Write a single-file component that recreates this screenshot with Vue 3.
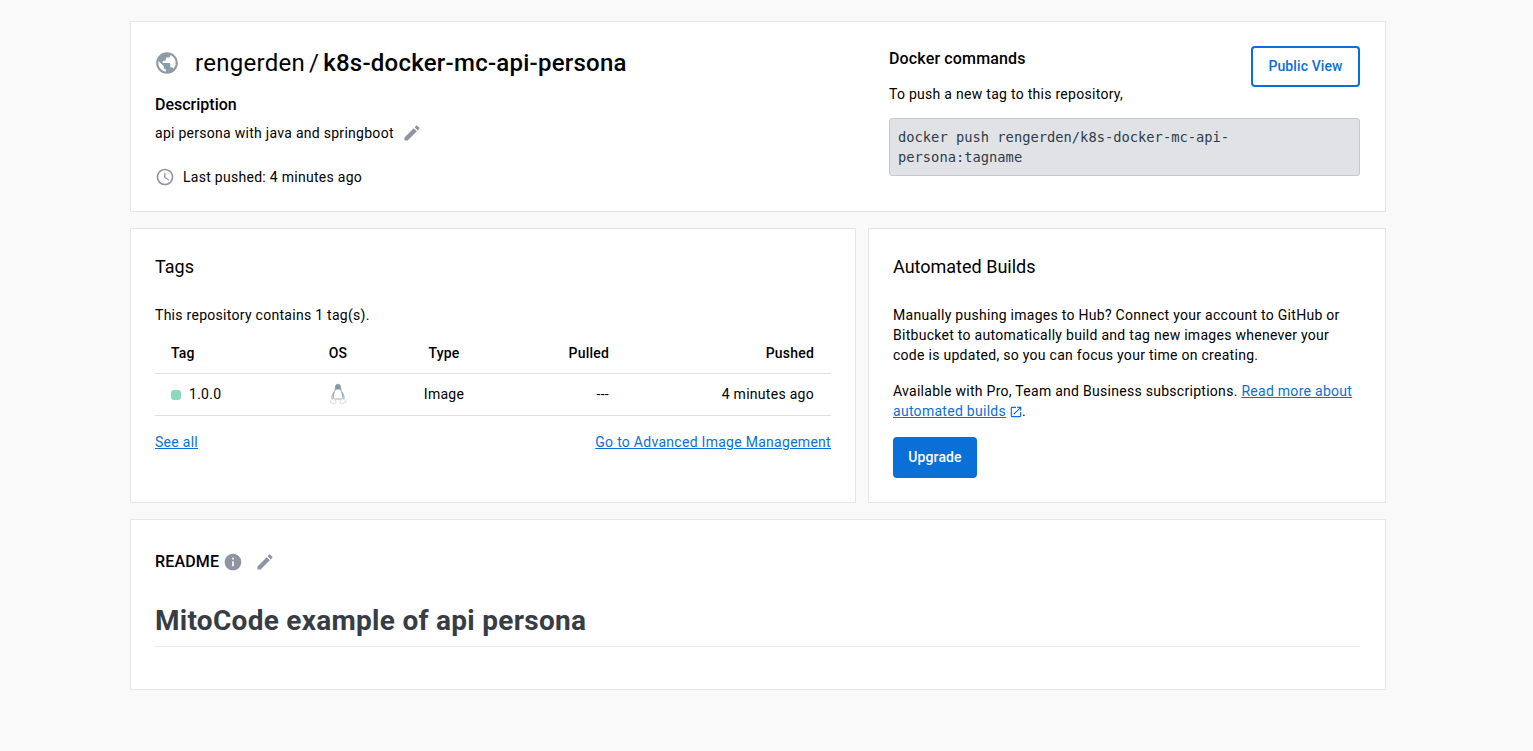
<template>
  <div class="page">
    <section class="card top">
      <div class="repo">
        <h1 class="repo-title">
          <svg class="globe" viewBox="0 0 24 24" width="26" height="26"><path d="M12 2C6.48 2 2 6.48 2 12s4.48 10 10 10 10-4.48 10-10S17.52 2 12 2zm-1 17.93c-3.95-.49-7-3.85-7-7.93 0-.62.08-1.21.21-1.79L9 15v1c0 1.1.9 2 2 2v1.93zm6.9-2.54c-.26-.81-1-1.39-1.9-1.39h-1v-3c0-.55-.45-1-1-1H8v-2h2c.55 0 1-.45 1-1V7h2c1.1 0 2-.9 2-2v-.41c2.93 1.19 5 4.06 5 7.41 0 2.08-.8 3.97-2.1 5.39z"/></svg>
          <span class="owner">rengerden</span><span class="slash">/</span><b>k8s-docker-mc-api-persona</b>
        </h1>
        <h2 class="label">Description</h2>
        <div class="desc">
          <span>api persona with java and springboot</span>
          <svg class="pencil" viewBox="0 0 24 24" width="20" height="20"><path d="M3 17.25V21h3.75L17.81 9.94l-3.75-3.75L3 17.25zM20.71 7.04a1 1 0 0 0 0-1.41l-2.34-2.34a1 1 0 0 0-1.41 0l-1.83 1.83 3.75 3.75 1.83-1.83z"/></svg>
        </div>
        <div class="pushed">
          <svg class="clock" viewBox="0 0 24 24" width="20" height="20"><path d="M11.99 2C6.47 2 2 6.48 2 12s4.47 10 9.99 10C17.52 22 22 17.52 22 12S17.52 2 11.99 2zM12 20c-4.42 0-8-3.58-8-8s3.58-8 8-8 8 3.58 8 8-3.58 8-8 8zm.5-13H11v6l5.25 3.15.75-1.23-4.5-2.67V7z"/></svg>
          <span>Last pushed: 4 minutes ago</span>
        </div>
      </div>
      <div class="commands">
        <div class="commands-head">
          <div>
            <h2 class="label">Docker commands</h2>
            <p class="push-note">To push a new tag to this repository,</p>
          </div>
          <button class="btn-outline"><span>Public View</span></button>
        </div>
        <div class="code">docker push rengerden/k8s-docker-mc-api-persona:tagname</div>
      </div>
    </section>

    <div class="middle">
      <section class="card tags">
        <h3 class="card-title">Tags</h3>
        <p class="count">This repository contains 1 tag(s).</p>
        <table class="tag-table">
          <thead>
            <tr>
              <th class="c-tag">Tag</th>
              <th class="c-os">OS</th>
              <th class="c-type">Type</th>
              <th class="c-pulled">Pulled</th>
              <th class="c-pushed">Pushed</th>
            </tr>
          </thead>
          <tbody>
            <tr v-for="row in rows" :key="row.tag">
              <td class="c-tag"><i class="dot"></i>{{ row.tag }}</td>
              <td class="c-os">
                <svg class="tux" viewBox="0 0 18 22" width="18" height="22">
                  <path d="M9 1.200C6.900 1.200 6.300 3 6.300 5.200c0 1.900-1 3.200-2 4.900-1 1.800-1.500 3.700-1.300 5.900h12c.2-2.200-.3-4.100-1.300-5.900-1-1.700-2-3-2-4.900C11.700 3 11.100 1.200 9 1.200z" fill="#fff" stroke="#9fadb8" stroke-width="1"/>
                  <path d="M9 1.200C6.900 1.200 6.300 3 6.300 5.200c0 .8-.2 1.500-.5 2.200C7 7.100 7.700 6.300 9 6.300s2 .8 3.200 1.100c-.3-.7-.5-1.400-.5-2.200C11.700 3 11.100 1.200 9 1.200z" fill="#8597a5"/>
                  <path d="M5.400 9.500C4.500 11.300 4.100 13 4.300 15M12.600 9.500c.9 1.800 1.300 3.500 1.100 5.500" fill="none" stroke="#7f909e" stroke-width=".9"/>
                  <path d="M3.800 15.800C3 17 1.900 17.600 1.100 18.300c-.5.500-.2 1 .5 1.200l3.100 1.200c1 .3 2.100-.1 2.300-1 .1-.9-.5-2-1.200-3.200-.6-1-1.500-1.300-2-.7zM14.200 15.800c.8 1.200 1.900 1.800 2.700 2.500.5.500.2 1-.5 1.200l-3.100 1.200c-1 .3-2.100-.1-2.300-1-.1-.9.5-2 1.200-3.200.6-1 1.500-1.300 2-.7z" fill="#fff" stroke="#c5ced6" stroke-width=".8"/>
                </svg>
              </td>
              <td class="c-type">{{ row.type }}</td>
              <td class="c-pulled">{{ row.pulled }}</td>
              <td class="c-pushed">{{ row.pushed }}</td>
            </tr>
          </tbody>
        </table>
        <div class="tag-links">
          <a href="#">See all</a>
          <a href="#">Go to Advanced Image Management</a>
        </div>
      </section>

      <section class="card builds">
        <h3 class="card-title">Automated Builds</h3>
        <p class="builds-text">Manually pushing images to Hub? Connect your account to GitHub or Bitbucket to automatically build and tag new images whenever your code is updated, so you can focus your time on creating.</p>
        <p class="builds-text plans">Available with Pro, Team and Business subscriptions. <a href="#">Read more about automated builds</a><svg class="ext" viewBox="0 0 24 24" width="14" height="14"><path d="M19 19H5V5h7V3H5a2 2 0 0 0-2 2v14a2 2 0 0 0 2 2h14c1.100 0 2-.9 2-2v-7h-2v7zM14 3v2h3.590l-9.830 9.830 1.410 1.410L19 6.410V10h2V3h-7z"/></svg>.</p>
        <button class="btn-solid">Upgrade</button>
      </section>
    </div>

    <section class="card readme">
      <div class="readme-head">
        <span class="readme-label">README</span>
        <svg class="info" viewBox="0 0 24 24" width="20" height="20"><path d="M12 2C6.480 2 2 6.480 2 12s4.480 10 10 10 10-4.480 10-10S17.520 2 12 2zm1 15h-2v-6h2v6zm0-8h-2V7h2v2z"/></svg>
        <svg class="pencil" viewBox="0 0 24 24" width="20" height="20"><path d="M3 17.250V21h3.750L17.810 9.940l-3.750-3.750L3 17.250zM20.710 7.040a1 1 0 0 0 0-1.410l-2.340-2.340a1 1 0 0 0-1.410 0l-1.830 1.830 3.750 3.750 1.830-1.830z"/></svg>
      </div>
      <h1 class="readme-title">MitoCode example of api persona</h1>
    </section>
  </div>
</template>

<script setup>
const rows = [
  { tag: '1.0.0', type: 'Image', pulled: '---', pushed: '4 minutes ago' }
]
</script>

<style>
html, body {
  margin: 0;
  background: #f9f9f9;
}
</style>

<style scoped>
.page {
  box-sizing: border-box;
  width: 1256px;
  height: 751px;
  margin-left: 130px;
  padding-top: 21px;
  display: flex;
  flex-direction: column;
  gap: 16px;
  font-family: Roboto, "Liberation Sans", sans-serif;
  font-size: 14px;
  line-height: 20px;
  letter-spacing: 0.28px;
  color: #000;
}
.card {
  box-sizing: border-box;
  background: #fff;
  border: 1px solid #e6e6e6;
}
h1, h2, h3, p {
  margin: 0;
  font-weight: normal;
}
a {
  color: #0b6fd8;
}

.top {
  height: 191px;
  padding: 24px 25px 0 24px;
  display: flex;
}
.repo {
  width: 734px;
}
.repo-title {
  display: flex;
  align-items: center;
  height: 34px;
  font-size: 24px;
  line-height: 34px;
}
.globe {
  fill: #8c9ba5;
  margin-right: 13px;
  margin-left: -1px;
}
.owner {
  margin-left: 2px;
}
.slash {
  margin: 0 4px;
}
.repo-title b {
  font-weight: 500;
  letter-spacing: 0.24px;
}
.label {
  font-size: 16px;
  font-weight: 500;
  line-height: 20px;
  letter-spacing: 0.15px;
}
.repo .label {
  margin-top: 15px;
  letter-spacing: 0;
}
.desc {
  display: flex;
  align-items: center;
  gap: 8px;
  margin-top: 8px;
}
.pencil {
  fill: #8f94a3;
}
.pushed {
  display: flex;
  align-items: center;
  gap: 8px;
  margin-top: 24px;
  height: 20px;
}
.clock {
  fill: #8f94a3;
}
.commands {
  width: 471px;
}
.commands-head {
  display: flex;
  justify-content: space-between;
  height: 72px;
}
.commands .label {
  margin-top: 3px;
}
.push-note {
  margin-top: 15px;
}
.btn-outline {
  box-sizing: border-box;
  width: 109px;
  height: 41px;
  padding-bottom: 2px;
  background: #fff;
  border: 2px solid #0b6fd8;
  border-radius: 4px;
  color: #0b6fd8;
  font: 500 14px Roboto, sans-serif;
  letter-spacing: 0.1px;
}
.code {
  box-sizing: border-box;
  height: 58px;
  padding: 8px 8px;
  background: #e1e2e6;
  border: 1px solid #c4c8d1;
  border-radius: 3px;
  color: #2f3d4a;
  font-family: "DejaVu Sans Mono", monospace;
  font-size: 13.75px;
  line-height: 20px;
  letter-spacing: 0;
}

.middle {
  display: flex;
  gap: 12px;
  height: 275px;
}
.tags {
  width: 726px;
  padding: 24px;
}
.builds {
  width: 518px;
  padding: 24px;
}
.card-title {
  font-size: 18px;
  line-height: 28px;
  letter-spacing: 0;
}
.count {
  margin-top: 24px;
}
.tag-table {
  width: 100%;
  margin-top: 10px;
  border-collapse: collapse;
  table-layout: fixed;
}
.tag-table th {
  height: 38px;
  padding: 0 16px 2px;
  box-sizing: border-box;
  font-weight: 500;
  letter-spacing: 0.2px;
  border-bottom: 1px solid #dfe0e3;
}
.tag-table td {
  height: 42px;
  padding: 0 16px;
  box-sizing: border-box;
  border-bottom: 1px solid #dfe0e3;
}
.c-tag {
  width: 144px;
  text-align: left;
}
.c-os {
  width: 78px;
  text-align: center;
}
.c-type {
  width: 134px;
  text-align: center;
}
.c-pulled {
  width: 114px;
  text-align: right;
}
.tag-table .c-pushed {
  padding-right: 17px;
  text-align: right;
}
.dot {
  display: inline-block;
  width: 10px;
  height: 10px;
  margin-right: 8px;
  border-radius: 3px;
  background: #8bd8c0;
  vertical-align: -1px;
}
.tux {
  display: block;
  margin: 0 auto;
}
.tag-links {
  display: flex;
  justify-content: space-between;
  margin-top: 16px;
}

.builds-text {
  margin-top: 24px;
}
.builds-text.plans {
  margin-top: 16px;
}
.ext {
  fill: #0b6fd8;
  margin-left: 3px;
  margin-right: -1px;
  vertical-align: -3px;
}
.btn-solid {
  display: block;
  width: 84px;
  height: 41px;
  margin-top: 16px;
  padding-bottom: 2px;
  background: #0b6fd8;
  border: 0;
  border-radius: 4px;
  color: #fff;
  font: 500 14px Roboto, sans-serif;
  letter-spacing: 0.1px;
}

.readme {
  height: 171px;
  padding: 32px 25px 0 24px;
}
.readme-head {
  display: flex;
  align-items: center;
  height: 20px;
}
.readme-label {
  font-size: 16px;
  font-weight: 500;
  letter-spacing: 0.15px;
}
.info {
  fill: #8f94a3;
  margin-left: 4px;
}
.readme-head .pencil {
  margin-left: 12px;
}
.readme-title {
  margin-top: 31px;
  padding-bottom: 7px;
  border-bottom: 1px solid #eaecef;
  font-size: 28px;
  font-weight: 700;
  line-height: 36px;
  color: #383c44;
}
</style>
